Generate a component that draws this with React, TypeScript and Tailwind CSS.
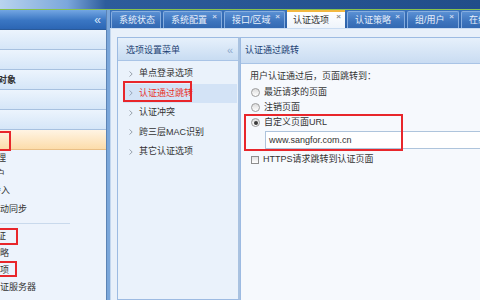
import React from "react";

const tabs = [
  { label: "系统状态", w: "w-[50px]", close: false, active: false },
  { label: "系统配置", w: "w-[59px]", close: true, active: false },
  { label: "接口/区域", w: "w-[61px]", close: true, active: false },
  { label: "认证选项", w: "w-[58px]", close: true, active: true },
  { label: "认证策略", w: "w-[58px]", close: true, active: false },
  { label: "组/用户", w: "w-[52px]", close: true, active: false },
  { label: "在线用户", w: "w-[60px]", close: true, active: false },
];

const menuItems = ["单点登录选项", "认证通过跳转", "认证冲突", "跨三层MAC识别", "其它认证选项"];

function Radio({ checked }: { checked?: boolean }) {
  return (
    <span className="w-[9px] h-[9px] rounded-full border border-[#9c9c9c] bg-[linear-gradient(#dcdcdc,#ffffff)] flex items-center justify-center shrink-0">
      {checked && <span className="w-[4px] h-[4px] rounded-full bg-[#3a3a3a]" />}
    </span>
  );
}

function Chevron({ color }: { color: string }) {
  return (
    <svg width="4" height="6" viewBox="0 0 4 6" className="shrink-0">
      <path d="M0.5 0.5 L3.2 3 L0.5 5.5" fill="none" stroke={color} strokeWidth="1" />
    </svg>
  );
}

export default function App() {
  return (
    <div className="relative w-[480px] h-[300px] overflow-hidden bg-[#eef4fb] text-[9px] leading-none text-[#222] [font-family:'Liberation_Sans','Noto_Sans_CJK_SC',sans-serif]">
      {/* top strip */}
      <div className="h-[9px] bg-[linear-gradient(90deg,#b9d4ee_0%,#7ba7dc_14%,#2d5c9b_22%,#214d89_100%)]" />
      <div className="h-[1px] bg-[#86c24c]" />

      <div className="flex h-[290px]">
        {/* sidebar */}
        <div className="w-[107px] flex flex-col bg-[#edf3fc] border-r border-[#5b83b5] overflow-hidden">
          <div className="h-[20px] shrink-0 flex items-center justify-end pr-[5px] bg-[linear-gradient(#73a6e2,#3a76c3_55%,#2c66b4)] border-b border-[#2a5a9a]">
            <span className="text-[12px] text-[#d6e6fa] leading-none">«</span>
          </div>
          {["", "", "网络对象", "", ""].map((t, i) => (
            <div
              key={i}
              className="h-[20px] shrink-0 flex items-center pt-[2px] bg-[linear-gradient(#ecf4fd,#d5e6f8)] border-b border-[#a7c1e0] whitespace-nowrap"
            >
              {t && <span className="ml-[-20px] font-bold text-[#333]">{t}</span>}
            </div>
          ))}
          <div className="h-[20px] shrink-0 bg-[linear-gradient(#fff4e4,#fcdcaa)] border-b border-[#e9bf86]" />
          <div className="flex flex-col whitespace-nowrap text-[#333]">
            <div className="h-[17px] flex items-center"><span className="ml-[-30px]">用户管理</span></div>
            <div className="h-[15px] flex items-center"><span className="ml-[-31px]">在线用户</span></div>
            <div className="h-[17px] flex items-center"><span className="ml-[-26px]">批量导入</span></div>
            <div className="h-[19px] flex items-center pt-[2px]"><span className="ml-[-9px]">自动同步</span></div>
            <div className="h-[10px] flex items-center"><div className="w-[70px] h-[1px] bg-[#c9d9ec]" /></div>
            <div className="h-[17px] flex items-center"><span className="ml-[-12px]">认证</span></div>
            <div className="h-[17px] flex items-center"><span className="ml-[-27px]">认证策略</span></div>
            <div className="h-[17px] flex items-center"><span className="ml-[-27px]">认证选项</span></div>
            <div className="h-[17px] flex items-center"><span className="ml-[-27px]">外部认证服务器</span></div>
          </div>
        </div>
        <div className="w-[3px] bg-[#7aa6da]" />

        {/* main */}
        <div className="flex-1 flex flex-col min-w-0">
          <div className="h-[18px] shrink-0 flex gap-[2px] pl-[1px] bg-[linear-gradient(#3b73bc,#2b60a7)] overflow-hidden">
            {tabs.map((t) =>
              t.active ? (
                <div
                  key={t.label}
                  className={`${t.w} shrink-0 relative flex items-center pl-[6px] bg-[linear-gradient(#ffffff,#eef4fb)] border-t-2 border-[#f3b83f] text-[#333] whitespace-nowrap`}
                >
                  {t.label}
                  <span className="absolute top-[1px] right-[4px] text-[8px] font-bold text-[#8a8a8a]">×</span>
                </div>
              ) : (
                <div
                  key={t.label}
                  className={`${t.w} shrink-0 relative flex items-center pl-[7px] mt-[1px] bg-[linear-gradient(#5a90d3,#3d74bd_60%,#3369b2)] border border-b-0 border-[#86addf] rounded-t-[2px] text-[#e8f0fb] whitespace-nowrap`}
                >
                  {t.label}
                  {t.close && <span className="absolute top-[1px] right-[4px] text-[8px] font-bold text-[#c9d9ef]">×</span>}
                </div>
              )
            )}
          </div>
          <div className="h-[1px] bg-[#c9dcf2]" />

          <div className="flex-1 flex pl-[6px] pt-[8px] bg-[#e8f0fa] border-l border-[#c2d6ee] min-h-0">
            {/* menu panel */}
            <div className="w-[123px] shrink-0 flex flex-col border border-[#9dbbe2] border-r-2 border-r-[#a9c2e0] bg-[#eaf2fb]">
              <div className="h-[23px] shrink-0 flex items-center justify-between pl-[8px] pr-[5px] pt-[2px] bg-[linear-gradient(#e6f0fb,#c8dcf2)] border-b border-[#a9c4e6] text-[#1b3f73]">
                <span>选项设置菜单</span>
                <span className="text-[11px] text-[#8da9cd]">«</span>
              </div>
              <div className="flex flex-col pl-[5px] pr-[1px] pt-[3px]">
                {menuItems.map((m, i) => (
                  <div
                    key={m}
                    className={`h-[19.5px] flex items-center gap-[6px] pl-[6px] whitespace-nowrap ${
                      i === 1 ? "bg-[#d3e3f6] text-[#e8352c]" : "text-[#333]"
                    }`}
                  >
                    <Chevron color={i === 1 ? "#9aa9bb" : "#9aa3ad"} />
                    <span>{m}</span>
                  </div>
                ))}
              </div>
            </div>

            {/* right panel */}
            <div className="flex-1 min-w-0 flex flex-col border-t border-l border-[#9dbbe2] bg-[#f6f9fd]">
              <div className="h-[26px] shrink-0 flex items-center pl-[4px] bg-[linear-gradient(#e6f0fb,#c9dcf2)] border-b border-[#a9c4e6] text-[#1b3f73] whitespace-nowrap">
                认证通过跳转
              </div>
              <div className="flex flex-col pl-[9px] pt-[5px] text-[#333] whitespace-nowrap">
                <div className="h-[15px] flex items-center">用户认证通过后，页面跳转到：</div>
                <div className="h-[16px] flex items-center gap-[4px] pl-[1px]"><Radio /><span>最近请求的页面</span></div>
                <div className="h-[15px] flex items-center gap-[4px] pl-[1px]"><Radio /><span>注销页面</span></div>
                <div className="h-[15px] flex items-center gap-[4px] pl-[1px]"><Radio checked /><span>自定义页面URL</span></div>
                <div className="mt-[1px] ml-[15px] w-[240px] h-[18px] flex items-center pl-[3px] bg-white border border-[#aec4dc] text-[#333]">
                  www.sangfor.com.cn
                </div>
                <div className="mt-[3px] h-[15px] flex items-center gap-[4px] pl-[1px]">
                  <span className="w-[8px] h-[8px] border border-[#8e8e8e] bg-[linear-gradient(#e2e2e2,#ffffff)] shrink-0" />
                  <span>HTTPS请求跳转到认证页面</span>
                </div>
              </div>
            </div>
          </div>
        </div>
      </div>

      {/* annotation boxes */}
      <div className="absolute left-[-2px] top-[131px] w-[13px] h-[20px] border-2 border-[#e8262b]" />
      <div className="absolute left-[-2px] top-[228px] w-[20px] h-[17px] border-2 border-[#e8262b]" />
      <div className="absolute left-[-2px] top-[261px] w-[19px] h-[16px] border-2 border-[#e8262b]" />
      <div className="absolute left-[123px] top-[81px] w-[69px] h-[21px] border-2 border-[#e8262b]" />
      <div className="absolute left-[244px] top-[114px] w-[159px] h-[37px] border-2 border-[#e8262b]" />
    </div>
  );
}
